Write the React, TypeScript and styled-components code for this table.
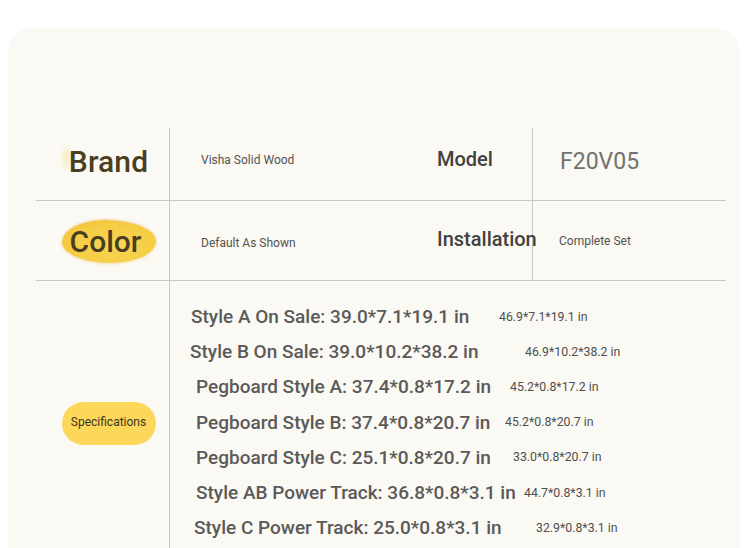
import React from "react";
import styled, { createGlobalStyle, css } from "styled-components";

const Global = createGlobalStyle`
  html, body { margin: 0; padding: 0; background: #ffffff; }
  body { font-family: Roboto, "Liberation Sans", Arial, sans-serif; overflow: hidden; }
  * { box-sizing: border-box; }
`;

const Page = styled.div`
  width: 750px;
  height: 548px;
  overflow: hidden;
  background: #ffffff;
  padding: 28px 10px 0 8px;
`;

const Card = styled.section`
  width: 732px;
  min-height: 540px;
  background: #faf9f4;
  border-radius: 24px 24px 0 0;
  padding: 100px 0 0 28px;
`;

const Table = styled.div`
  width: 690px;
  display: flex;
  flex-direction: column;
`;

const Row = styled.div<{ $h?: number; $last?: boolean }>`
  display: flex;
  align-items: stretch;
  ${(p) => p.$h && css`height: ${p.$h}px;`}
  ${(p) => !p.$last && css`border-bottom: 1px solid #c9c7c3;`}
`;

const LabelCell = styled.div<{ $dy?: number }>`
  width: 134px;
  flex: none;
  border-right: 1px solid #c9c7c3;
  padding-left: 12px;
  display: flex;
  align-items: center;
  justify-content: center;
  ${(p) => p.$dy && css`padding-bottom: ${p.$dy}px;`}
`;

const ValueCell = styled.div<{ $w?: number; $pad: number; $up?: number; $down?: number }>`
  ${(p) => (p.$w ? css`width: ${p.$w}px; flex: none;` : css`flex: 1;`)}
  padding-left: ${(p) => p.$pad}px;
  display: flex;
  align-items: center;
  ${(p) => p.$down && css`padding-top: ${p.$down}px;`}
  ${(p) => p.$up && css`padding-bottom: ${p.$up}px;`}
`;

const SideLabelCell = styled.div<{ $dy?: number }>`
  width: 96px;
  flex: none;
  border-right: 1px solid #c9c7c3;
  display: flex;
  align-items: center;
  white-space: nowrap;
  ${(p) => p.$dy && css`padding-bottom: ${p.$dy}px;`}
`;

const BigTitle = styled.span`
  position: relative;
  font-size: 30px;
  font-weight: 500;
  color: #4a3e20;
  letter-spacing: 0.1px;
  line-height: 1;
  &::before {
    content: "";
    position: absolute;
    left: -10px;
    top: -4px;
    width: 14px;
    height: 30px;
    border-radius: 50%;
    background: radial-gradient(closest-side, rgba(250, 232, 170, 0.7), rgba(250, 240, 200, 0));
    z-index: 0;
  }
  & > span { position: relative; }
`;

const Blob = styled.div`
  width: 94px;
  height: 43px;
  margin-top: 1px;
  border-radius: 46% 54% 48% 52% / 52% 50% 50% 48%;
  background: radial-gradient(ellipse at 55% 60%, #f9d655 0%, #f6cd45 55%, #efbf35 100%);
  box-shadow: 0 -1px 2px rgba(240, 150, 80, 0.35), 0 1px 3px rgba(240, 200, 80, 0.4);
  display: flex;
  align-items: center;
  justify-content: center;
  font-size: 30px;
  font-weight: 500;
  color: #4a3e20;
  padding-right: 6px;
`;

const Pill = styled.div`
  width: 94px;
  height: 43px;
  margin-top: 3px;
  border-radius: 22px;
  background: #fcd75a;
  display: flex;
  align-items: center;
  justify-content: center;
  font-size: 12px;
  color: #3f3620;
  padding-bottom: 3px;
`;

const SmallText = styled.span<{ $size?: number }>`
  font-size: ${(p) => p.$size ?? 12}px;
  color: #555350;
  white-space: nowrap;
`;

const SideLabel = styled.span`
  font-size: 20px;
  font-weight: 500;
  color: #424140;
`;

const ModelValue = styled.span`
  font-size: 23px;
  color: #727170;
`;

const SpecList = styled.div`
  flex: 1;
  display: flex;
  flex-direction: column;
  padding: 18px 0 18px 0;
`;

const SpecRow = styled.div<{ $indent: number }>`
  height: 35.2px;
  display: flex;
  align-items: center;
  padding-left: ${(p) => p.$indent}px;
`;

const SpecMain = styled.span<{ $w: number }>`
  width: ${(p) => p.$w}px;
  flex: none;
  font-size: 19px;
  font-weight: 500;
  color: #5b5a59;
  white-space: nowrap;
`;

const SpecAlt = styled.span`
  font-size: 12.3px;
  color: #4f4e4d;
  white-space: nowrap;
`;

const specs = [
  { main: "Style A On Sale: 39.0*7.1*19.1 in", alt: "46.9*7.1*19.1 in", x: 191, altX: 499 },
  { main: "Style B On Sale: 39.0*10.2*38.2 in", alt: "46.9*10.2*38.2 in", x: 190, altX: 525 },
  { main: "Pegboard Style A: 37.4*0.8*17.2 in", alt: "45.2*0.8*17.2 in", x: 196, altX: 510 },
  { main: "Pegboard Style B: 37.4*0.8*20.7 in", alt: "45.2*0.8*20.7 in", x: 196, altX: 505 },
  { main: "Pegboard Style C: 25.1*0.8*20.7 in", alt: "33.0*0.8*20.7 in", x: 196, altX: 513 },
  { main: "Style AB Power Track: 36.8*0.8*3.1 in", alt: "44.7*0.8*3.1 in", x: 196, altX: 524 },
  { main: "Style C Power Track: 25.0*0.8*3.1 in", alt: "32.9*0.8*3.1 in", x: 194, altX: 536 },
];

const LIST_LEFT = 170;

export default function App() {
  return (
    <>
      <Global />
      <Page>
        <Card>
          <Table>
            <Row $h={73}>
              <LabelCell $dy={4}>
                <BigTitle>
                  <span>Brand</span>
                </BigTitle>
              </LabelCell>
              <ValueCell $w={267} $pad={31} $up={8}>
                <SmallText>Visha Solid Wood</SmallText>
              </ValueCell>
              <SideLabelCell $dy={10}>
                <SideLabel>Model</SideLabel>
              </SideLabelCell>
              <ValueCell $pad={27} $up={5}>
                <ModelValue>F20V05</ModelValue>
              </ValueCell>
            </Row>
            <Row $h={80}>
              <LabelCell>
                <Blob>Color</Blob>
              </LabelCell>
              <ValueCell $w={267} $pad={31} $down={4}>
                <SmallText>Default As Shown</SmallText>
              </ValueCell>
              <SideLabelCell $dy={4}>
                <SideLabel>Installation</SideLabel>
              </SideLabelCell>
              <ValueCell $pad={26}>
                <SmallText $size={12}>Complete Set</SmallText>
              </ValueCell>
            </Row>
            <Row $last>
              <LabelCell>
                <Pill>Specifications</Pill>
              </LabelCell>
              <SpecList>
                {specs.map((s) => (
                  <SpecRow key={s.main} $indent={s.x - LIST_LEFT}>
                    <SpecMain $w={s.altX - s.x}>{s.main}</SpecMain>
                    <SpecAlt>{s.alt}</SpecAlt>
                  </SpecRow>
                ))}
              </SpecList>
            </Row>
          </Table>
        </Card>
      </Page>
    </>
  );
}
